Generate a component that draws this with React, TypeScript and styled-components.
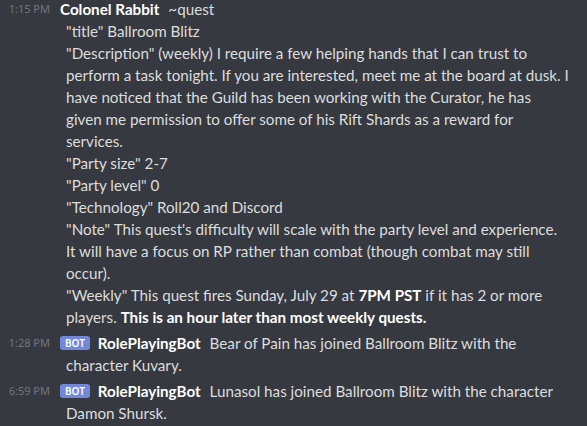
import styled, { createGlobalStyle } from "styled-components";

const GlobalStyle = createGlobalStyle`
  html, body {
    margin: 0;
    padding: 0;
    background: #36393f;
  }
  body {
    font-family: "Lato", "Noto Sans", sans-serif;
    overflow: hidden;
  }
`;

const StyledChat = styled.div`
  width: 587px;
  height: 426px;
  background: #36393f;
  color: #dcddde;
  margin-top: -4px;
  box-sizing: border-box;
`;

const StyledMessage = styled.div`
  display: flex;
  align-items: flex-start;
  padding: 2px 0;
`;

const StyledTimestamp = styled.span`
  flex: 0 0 50px;
  text-align: right;
  font-family: "Noto Sans", sans-serif;
  font-size: 11px;
  line-height: 22px;
  color: #72767d;
  padding-right: 10px;
  white-space: nowrap;
`;

const StyledContent = styled.div`
  flex: 1;
  font-size: 15.2px;
  line-height: 22px;
  padding-left: 6px;
  text-indent: -6px;
  white-space: nowrap;
`;

const StyledUsername = styled.span`
  color: #ffffff;
  font-weight: 700;
  margin-right: 9px;
`;

const StyledBotTag = styled.span`
  display: inline-block;
  text-indent: 0;
  background: #7289da;
  color: #ffffff;
  font-family: "Noto Sans", sans-serif;
  font-size: 10px;
  font-weight: 600;
  line-height: 14px;
  height: 14px;
  padding: 0 5px;
  border-radius: 3px;
  vertical-align: 2px;
  margin-right: 8px;
`;

const StyledLine = styled.span`
  display: block;
  text-indent: 0;
`;

const StyledStrong = styled.strong`
  color: #ffffff;
  font-weight: 700;
`;

export default function App() {
  return (
    <>
      <GlobalStyle />
      <StyledChat>
        <StyledMessage>
          <StyledTimestamp>1:15 PM</StyledTimestamp>
          <StyledContent>
            <StyledUsername>Colonel Rabbit</StyledUsername>~quest
            <StyledLine>"title" Ballroom Blitz</StyledLine>
            <StyledLine>
              "Description" (weekly) I require a few helping hands that I can trust to
              <br />
              perform a task tonight. If you are interested, meet me at the board at dusk. I
              <br />
              have noticed that the Guild has been working with the Curator, he has
              <br />
              given me permission to offer some of his Rift Shards as a reward for
              <br />
              services.
            </StyledLine>
            <StyledLine>"Party size" 2-7</StyledLine>
            <StyledLine>"Party level" 0</StyledLine>
            <StyledLine>"Technology" Roll20 and Discord</StyledLine>
            <StyledLine>
              "Note" This quest's difficulty will scale with the party level and experience.
              <br />
              It will have a focus on RP rather than combat (though combat may still
              <br />
              occur).
            </StyledLine>
            <StyledLine>
              "Weekly" This quest fires Sunday, July 29 at <StyledStrong>7PM PST</StyledStrong> if it
              has 2 or more
              <br />
              players. <StyledStrong>This is an hour later than most weekly quests.</StyledStrong>
            </StyledLine>
          </StyledContent>
        </StyledMessage>
        <StyledMessage>
          <StyledTimestamp>1:28 PM</StyledTimestamp>
          <StyledContent>
            <StyledBotTag>BOT</StyledBotTag>
            <StyledUsername>RolePlayingBot</StyledUsername>Bear of Pain has joined Ballroom Blitz with
            the
            <StyledLine>character Kuvary.</StyledLine>
          </StyledContent>
        </StyledMessage>
        <StyledMessage>
          <StyledTimestamp>6:59 PM</StyledTimestamp>
          <StyledContent>
            <StyledBotTag>BOT</StyledBotTag>
            <StyledUsername>RolePlayingBot</StyledUsername>Lunasol has joined Ballroom Blitz with the
            character
            <StyledLine>Damon Shursk.</StyledLine>
          </StyledContent>
        </StyledMessage>
      </StyledChat>
    </>
  );
}
